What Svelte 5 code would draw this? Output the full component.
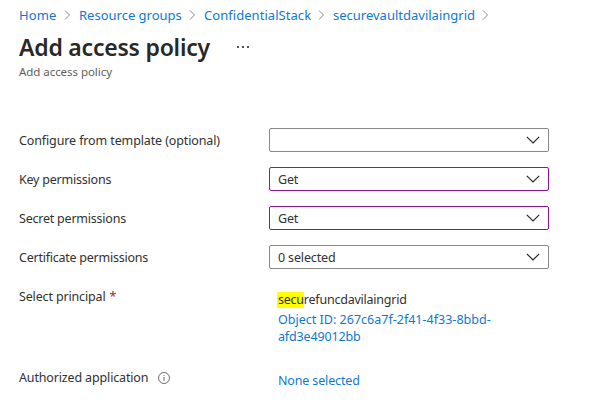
<script>
  const crumbs = [
    { text: 'Home', width: 38, spacing: 0.1 },
    { text: 'Resource groups', width: 103, spacing: 0 },
    { text: 'ConfidentialStack', width: 107, spacing: 0.05 },
    { text: 'securevaultdavilaingrid', width: 142, spacing: 0 }
  ];
  const fields = [
    { label: 'Configure from template (optional)', value: '', changed: false, spacing: -0.12 },
    { label: 'Key permissions', value: 'Get', changed: true, spacing: -0.22 },
    { label: 'Secret permissions', value: 'Get', changed: true, spacing: -0.22 },
    { label: 'Certificate permissions', value: '0 selected', changed: false, spacing: -0.24 }
  ];
</script>

<main>
  <nav>
    {#each crumbs as crumb}
      <a href="#top" style:width="{crumb.width}px" style:letter-spacing="{crumb.spacing}px">{crumb.text}</a>
      <svg class="sep" width="22" height="12" viewBox="0 0 22 12"><path d="M8 1.500 12.500 6 8 10.500" /></svg>
    {/each}
  </nav>

  <header>
    <h1>Add access policy</h1>
    <svg width="12" height="4" viewBox="0 0 12 4"><path d="M0 1h2v2H0zM5 1h2v2H5zM10 1h2v2h-2z" /></svg>
  </header>
  <p class="subtitle">Add access policy</p>

  <form>
    {#each fields as field}
      <div class="row">
        <span class="label" style:letter-spacing="{field.spacing}px">{field.label}</span>
        <div class="select" class:changed={field.changed}>
          <span>{field.value}</span>
          <svg width="14" height="8" viewBox="0 0 14 8"><path d="m.8.8 6.200 6.200 6.200-6.200" /></svg>
        </div>
      </div>
    {/each}
    <div class="row principal">
      <span class="label">Select principal <b>*</b></span>
      <div class="value">
        <div class="name"><mark>secu</mark>refuncdavilaingrid</div>
        <a class="oid" href="#top"><span>Object ID: 267c6a7f-2f41-4f33-8bbd-</span><br />afd3e49012bb</a>
      </div>
    </div>
    <div class="row app">
      <span class="label">Authorized application
        <svg width="12" height="12" viewBox="0 0 12 12"><circle cx="6" cy="6" r="5.500" /><path d="M6 5v4M6 3v1" /></svg>
      </span>
      <div class="value"><a href="#top">None selected</a></div>
    </div>
  </form>
</main>

<style>
  :global(body) { background: #fff; }
  main {
    box-sizing: border-box;
    width: 616px;
    height: 404px;
    overflow: hidden;
    padding: 6px 0 0 19px;
    font: 12.500px/18px "Noto Sans", sans-serif;
    letter-spacing: -0.15px;
    color: #323130;
  }
  a { color: #0f78d4; text-decoration: none; }
  nav { display: flex; align-items: center; height: 18px; font-size: 13px; }
  nav a { flex: none; white-space: nowrap; }
  .sep { flex: none; fill: none; stroke: #8a8886; }
  header { display: flex; align-items: center; height: 36px; margin-top: 5px; }
  h1 { width: 218px; margin: 0; font-size: 23px; line-height: 36px; font-weight: 600; letter-spacing: -0.22px; white-space: nowrap; color: #292827; }
  header svg { fill: #55534f; }
  .subtitle { margin: 0; font-size: 11.500px; line-height: 14px; letter-spacing: -0.05px; color: #605e5c; }
  form { margin-top: 49px; }
  .row { display: flex; height: 24px; margin-bottom: 15px; }
  .label { box-sizing: border-box; display: flex; align-items: center; width: 250px; height: 24px; padding-top: 2px; white-space: nowrap; }
  .label b { margin-left: 4px; font-weight: 400; color: #a4262c; }
  .select {
    box-sizing: border-box;
    display: flex;
    align-items: center;
    justify-content: space-between;
    width: 280px;
    height: 24px;
    padding: 0 8px;
    border: 1px solid #8a8886;
    border-radius: 2px;
  }
  .select span { padding-top: 2px; }
  .select.changed { border-color: #881798; }
  .select svg { fill: none; stroke: #292827; stroke-width: 1.200; }
  .principal { height: 66px; }
  .value { padding: 7px 0 0 9px; white-space: nowrap; }
  .name { height: 18px; line-height: 18px; letter-spacing: -0.23px; }
  mark { display: inline-block; height: 16px; line-height: 16px; margin-left: -1px; padding-left: 1px; background: #ff0; color: inherit; }
  .oid { display: block; margin-top: 2px; line-height: 17px; }
  .oid span { letter-spacing: 0.01px; }
  .app .value { padding-top: 7px; }
  .label svg { margin-left: 10px; fill: none; stroke: #605e5c; stroke-width: 0.900; }
</style>
